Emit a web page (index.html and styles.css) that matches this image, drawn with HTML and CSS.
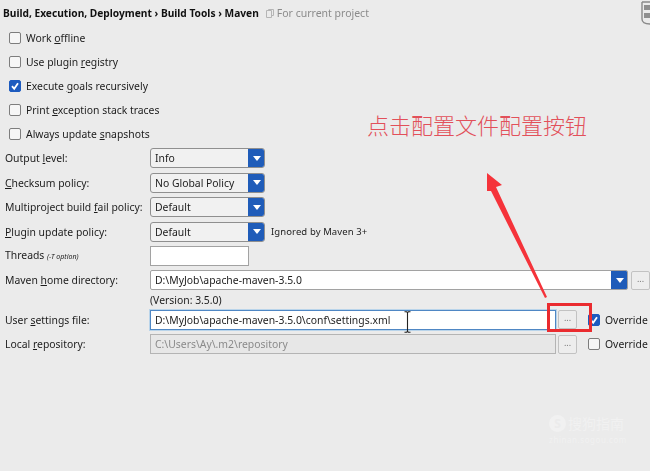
FILE: index.html
```html
<!DOCTYPE html>
<html lang="en">
<head>
<meta charset="utf-8">
<title>Maven settings</title>
<link rel="stylesheet" href="styles.css">
</head>
<body>
<main class="page">
  <header class="crumbs">
    <span class="crumb-path">Build, Execution, Deployment › Build Tools › Maven</span>
    <svg class="scope-icon" viewBox="0 0 8 9"><path d="M.5 1.5h5v7h-5z M2.5 1.5V.5h5v6h-2" fill="none" stroke="#b5b5b5"/></svg>
    <span class="scope">For current project</span>
  </header>

  <section class="checks">
    <label class="check"><span class="box"></span><span>Work <u>o</u>ffline</span></label>
    <label class="check"><span class="box"></span><span>Use plugin <u>r</u>egistry</span></label>
    <label class="check"><span class="box on"><svg viewBox="0 0 12 12"><path d="M3 6.2l2.2 2.6L9 3.2" fill="none" stroke="#fff" stroke-width="1.8"/></svg></span><span>Execute <u>g</u>oals recursively</span></label>
    <label class="check"><span class="box"></span><span>Print <u>e</u>xception stack traces</span></label>
    <label class="check"><span class="box"></span><span>Always update <u>s</u>napshots</span></label>
  </section>

  <section class="form">
    <div class="row">
      <span class="label">Output <u>l</u>evel:</span>
      <div class="combo"><span class="combo-value">Info</span><span class="arrow"><i></i></span></div>
    </div>
    <div class="row">
      <span class="label"><u>C</u>hecksum policy:</span>
      <div class="combo"><span class="combo-value">No Global Policy</span><span class="arrow"><i></i></span></div>
    </div>
    <div class="row">
      <span class="label">Multiproject build <u>f</u>ail policy:</span>
      <div class="combo"><span class="combo-value">Default</span><span class="arrow"><i></i></span></div>
    </div>
    <div class="row">
      <span class="label"><u>P</u>lugin update policy:</span>
      <div class="combo"><span class="combo-value">Default</span><span class="arrow"><i></i></span></div>
      <span class="hint">Ignored by Maven 3+</span>
    </div>
    <div class="row">
      <span class="label">Threads <em class="tiny">(-T option)</em></span>
      <div class="field threads"></div>
    </div>
    <div class="row">
      <span class="label">Maven <u>h</u>ome directory:</span>
      <div class="combo home"><span class="combo-value">D:\MyJob\apache-maven-3.5.0</span><span class="arrow"><i></i></span></div>
      <span class="dots">...</span>
    </div>
    <div class="row version-row">
      <span class="label"></span>
      <span class="version">(Version: 3.5.0)</span>
    </div>
    <div class="row">
      <span class="label">User <u>s</u>ettings file:</span>
      <div class="field path focus">D:\MyJob\apache-maven-3.5.0\conf\settings.xml</div>
      <span class="dots">...</span>
      <label class="check override"><span class="box on"><svg viewBox="0 0 12 12"><path d="M3 6.2l2.2 2.6L9 3.2" fill="none" stroke="#fff" stroke-width="1.8"/></svg></span><span>Override</span></label>
    </div>
    <div class="row">
      <span class="label">Local <u>r</u>epository:</span>
      <div class="field path off">C:\Users\Ay\.m2\repository</div>
      <span class="dots">...</span>
      <label class="check override"><span class="box"></span><span>Override</span></label>
    </div>
  </section>
</main>

<div class="note">点击配置文件配置按钮</div>
<div class="highlight"></div>
<svg class="pointer" viewBox="0 0 70 135"><polygon points="6,1 21,13 15,15 66,125 64,126 10,19 6,19" fill="#f5333a"/></svg>
<svg class="ibeam" viewBox="0 0 7 22"><path d="M.5 .8h2.2l.8 .8.8-.8h2.2M3.5 1.6v18.8M.5 21.2h2.2l.8-.8.8 .8h2.2" fill="none" stroke="#222" stroke-width="1.1"/></svg>
<svg class="corner" viewBox="0 0 9 25"><path d="M1 1h8M1 1v17c0 3 3 5 8 5" fill="none" stroke="#8a8a8a" stroke-width="1.4"/><path d="M3 4h6v5H3zM3 12h6v5H3z" fill="#8f8f8f"/></svg>
<div class="mark">
  <div class="mark-top"><span class="mark-s">S</span><span class="mark-name">搜狗指南</span></div>
  <div class="mark-url">zhinan.sogou.com</div>
</div>
</body>
</html>
```
FILE: styles.css
```css
* { box-sizing: border-box; }
html, body { margin: 0; height: 100%; }
body {
  position: relative;
  width: 650px;
  height: 471px;
  overflow: hidden;
  background: #ebebeb;
  color: #1c1c1c;
  font: 10.4px/14px "Noto Sans", "Open Sans", sans-serif;
}
u { text-underline-offset: 1px; text-decoration-thickness: 1px; }

.page { padding: 5px 0 0 0; filter: blur(.35px); }

.crumbs { display: flex; align-items: center; height: 16px; padding-left: 3px; margin-bottom: 5px; }
.crumb-path { font-weight: 700; font-size: 10.2px; white-space: nowrap; color: #111; }
.scope-icon { width: 8px; height: 9px; margin-left: 7px; }
.scope { margin-left: 3px; color: #8b8b8b; font-size: 10.5px; }

.checks { display: flex; flex-direction: column; padding-left: 9px; }
.check { display: flex; align-items: center; gap: 5px; height: 24px; white-space: nowrap; }
.box {
  display: block; flex: none; width: 12px; height: 12px;
  border: 1px solid #7d7d7d; border-radius: 2px; background: #f6f6f6;
}
.box svg { display: block; width: 12px; height: 12px; margin: -1px; }
.box.on { background: #1d5bbf; border-color: #1d5bbf; }

.form { display: flex; flex-direction: column; gap: 4.4px; margin-top: 2.4px; }
.row { display: flex; align-items: center; height: 20px; padding-left: 5px; white-space: nowrap; }
.label { flex: none; width: 145px; }
.tiny { font-size: 7px; font-style: italic; }

.combo {
  display: flex; flex: none; width: 115px; height: 20px;
  border: 1px solid #8f8f8f; border-radius: 3px; background: #f1f1f1;
  overflow: hidden;
}
.combo-value { flex: 1; padding-left: 4px; line-height: 18px; }
.arrow {
  display: flex; flex: none; align-items: center; justify-content: center;
  width: 17px; margin: -1px; background: #1f5cb9;
}
.arrow i {
  width: 0; height: 0;
  border-left: 4px solid transparent; border-right: 4px solid transparent; border-top: 5px solid #fff;
}
.hint { margin-left: 6px; font-size: 9.5px; letter-spacing: .1px; color: #222; }

.field {
  flex: none; height: 20px; padding-left: 4px; line-height: 18px;
  border: 1px solid #a2a2a2; background: #fff;
}
.threads { width: 99px; }
.home { width: 478px; background: #fff; border-color: #a2a2a2; border-radius: 2px; }
.version-row { height: 16px; margin-top: -3px; margin-bottom: -2.2px; }
.path { width: 406px; }
.focus { border: 1px solid #4f87c4; box-shadow: 0 0 0 1px #b9d4ea; color: #1c1c1c; }
.off { background: #e7e7e7; color: #8a8a8a; border-color: #b4b4b4; }

.dots {
  display: flex; flex: none; align-items: center; justify-content: center;
  width: 19px; height: 19px; margin-left: 2px; padding-bottom: 3px;
  border: 1px solid #c2c2c2; border-radius: 2px; background: #ededed;
  font-size: 9px; color: #777;
}
.home + .dots { margin-left: 3px; }
.override { margin-left: 11px; gap: 5px; height: 20px; }

.note {
  position: absolute; left: 367px; top: 110px;
  font: 300 22px/28px "Noto Sans CJK SC", sans-serif;
  color: #e2505a; white-space: nowrap;
}
.highlight {
  position: absolute; left: 547px; top: 303px; width: 45px; height: 29px;
  border: 3px solid #ea2b2f;
}
.pointer { position: absolute; left: 481px; top: 172px; width: 70px; height: 135px; }
.ibeam { position: absolute; left: 404px; top: 311px; width: 7px; height: 22px; }
.corner { position: absolute; left: 641px; top: 1px; width: 9px; height: 25px; }

.mark { position: absolute; left: 549px; top: 414px; width: 78px; color: #f1f1f1; text-align: center; }
.mark-top { display: flex; align-items: center; gap: 2px; height: 18px; }
.mark-s {
  display: block; width: 17px; height: 17px; border-radius: 50%;
  background: #f1f1f1; color: #ebebeb; font: 700 12px/17px "Noto Sans", sans-serif;
}
.mark-name { font: 14px/18px "Noto Sans CJK SC", sans-serif; white-space: nowrap; }
.mark-url { margin-top: 3px; font-size: 8px; line-height: 10px; letter-spacing: .55px; white-space: nowrap; }
```
